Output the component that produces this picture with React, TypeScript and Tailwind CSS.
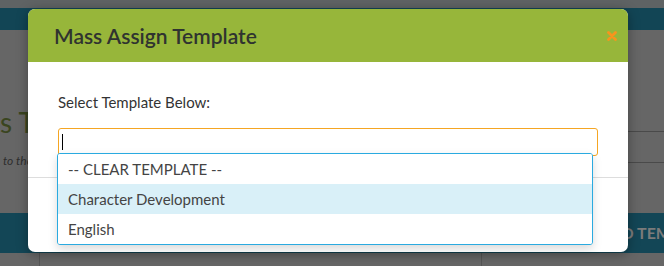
import { useState } from "react";

const options = ["-- CLEAR TEMPLATE --", "Character Development", "English"];

export default function App() {
  const [active, setActive] = useState(1);

  return (
    <div className="relative w-[664px] h-[266px] overflow-hidden bg-[#666666] font-['Lato',sans-serif]">
      {/* dimmed page behind the modal */}
      <div className="h-[8px] bg-[#5f6364]" />
      <div className="h-[22px] bg-[#124555]" />
      <div className="flex h-[183px]">
        <div className="w-[28px] pt-[76px]">
          <div className="text-[28px] leading-[32px] text-[#3a4520] whitespace-nowrap">s T</div>
          <div className="mt-[14px] pl-[3px] text-[12px] italic text-[#2e2e2e] whitespace-nowrap">to the</div>
        </div>
        <div className="flex-1" />
        <div className="w-[36px] pt-[101px]">
          <div className="h-[32px] border-y border-[#4a4a4a]" />
        </div>
      </div>
      <div className="flex h-[40px] items-center justify-end bg-[#134656]">
        <span className="text-[16px] font-bold text-[#7b7b7b] whitespace-nowrap -mr-[54px]">ASSIGNED TO TEMPLATE</span>
      </div>
      <div className="flex h-[13px]">
        <div className="w-[40px] border-r border-[#555]" />
        <div className="w-[442px] border-r border-[#555]" />
      </div>

      {/* modal */}
      <div className="absolute left-[28px] top-[9px] w-[600px] h-[243px] rounded-[7px] bg-white shadow-[0_2px_12px_rgba(0,0,0,0.35)]">
        <div className="flex h-[53px] items-center justify-between rounded-t-[7px] bg-[#97b63a] pl-[26px] pr-[11px]">
          <h2 className="text-[21px] font-semibold text-[#2f3330]">Mass Assign Template</h2>
          <button className="flex h-[10px] w-[10px] items-center justify-center">
            <svg viewBox="0 0 10 10" className="h-[10px] w-[10px]">
              <path d="M1.5 1.5 L8.5 8.5 M8.5 1.5 L1.5 8.5" stroke="#f7941d" strokeWidth="2.8" strokeLinecap="round" />
            </svg>
          </button>
        </div>
        <div className="px-[30px] pt-[30px]">
          <label className="block text-[15px] leading-[20px] text-[#333]">Select Template Below:</label>
          <div className="mt-[16px] flex h-[28px] items-center rounded-[3px] border border-[#f5a623] px-[3px]">
            <span className="h-[16px] w-px bg-black" />
          </div>
        </div>
        <div className="mt-[21px] border-t border-[#dddddd]" />

        <ul className="absolute left-[29px] top-[144px] w-[536px] overflow-hidden rounded-[3px] border border-[#2aaae0] bg-white shadow-[0_4px_10px_rgba(0,0,0,0.15)]">
          {options.map((o, i) => (
            <li
              key={o}
              onMouseEnter={() => setActive(i)}
              className={`flex h-[30px] items-center px-[10px] text-[15px] text-[#444] ${
                active === i ? "bg-[#d9f0f8]" : "bg-white"
              }`}
            >
              {o}
            </li>
          ))}
        </ul>
      </div>
    </div>
  );
}
